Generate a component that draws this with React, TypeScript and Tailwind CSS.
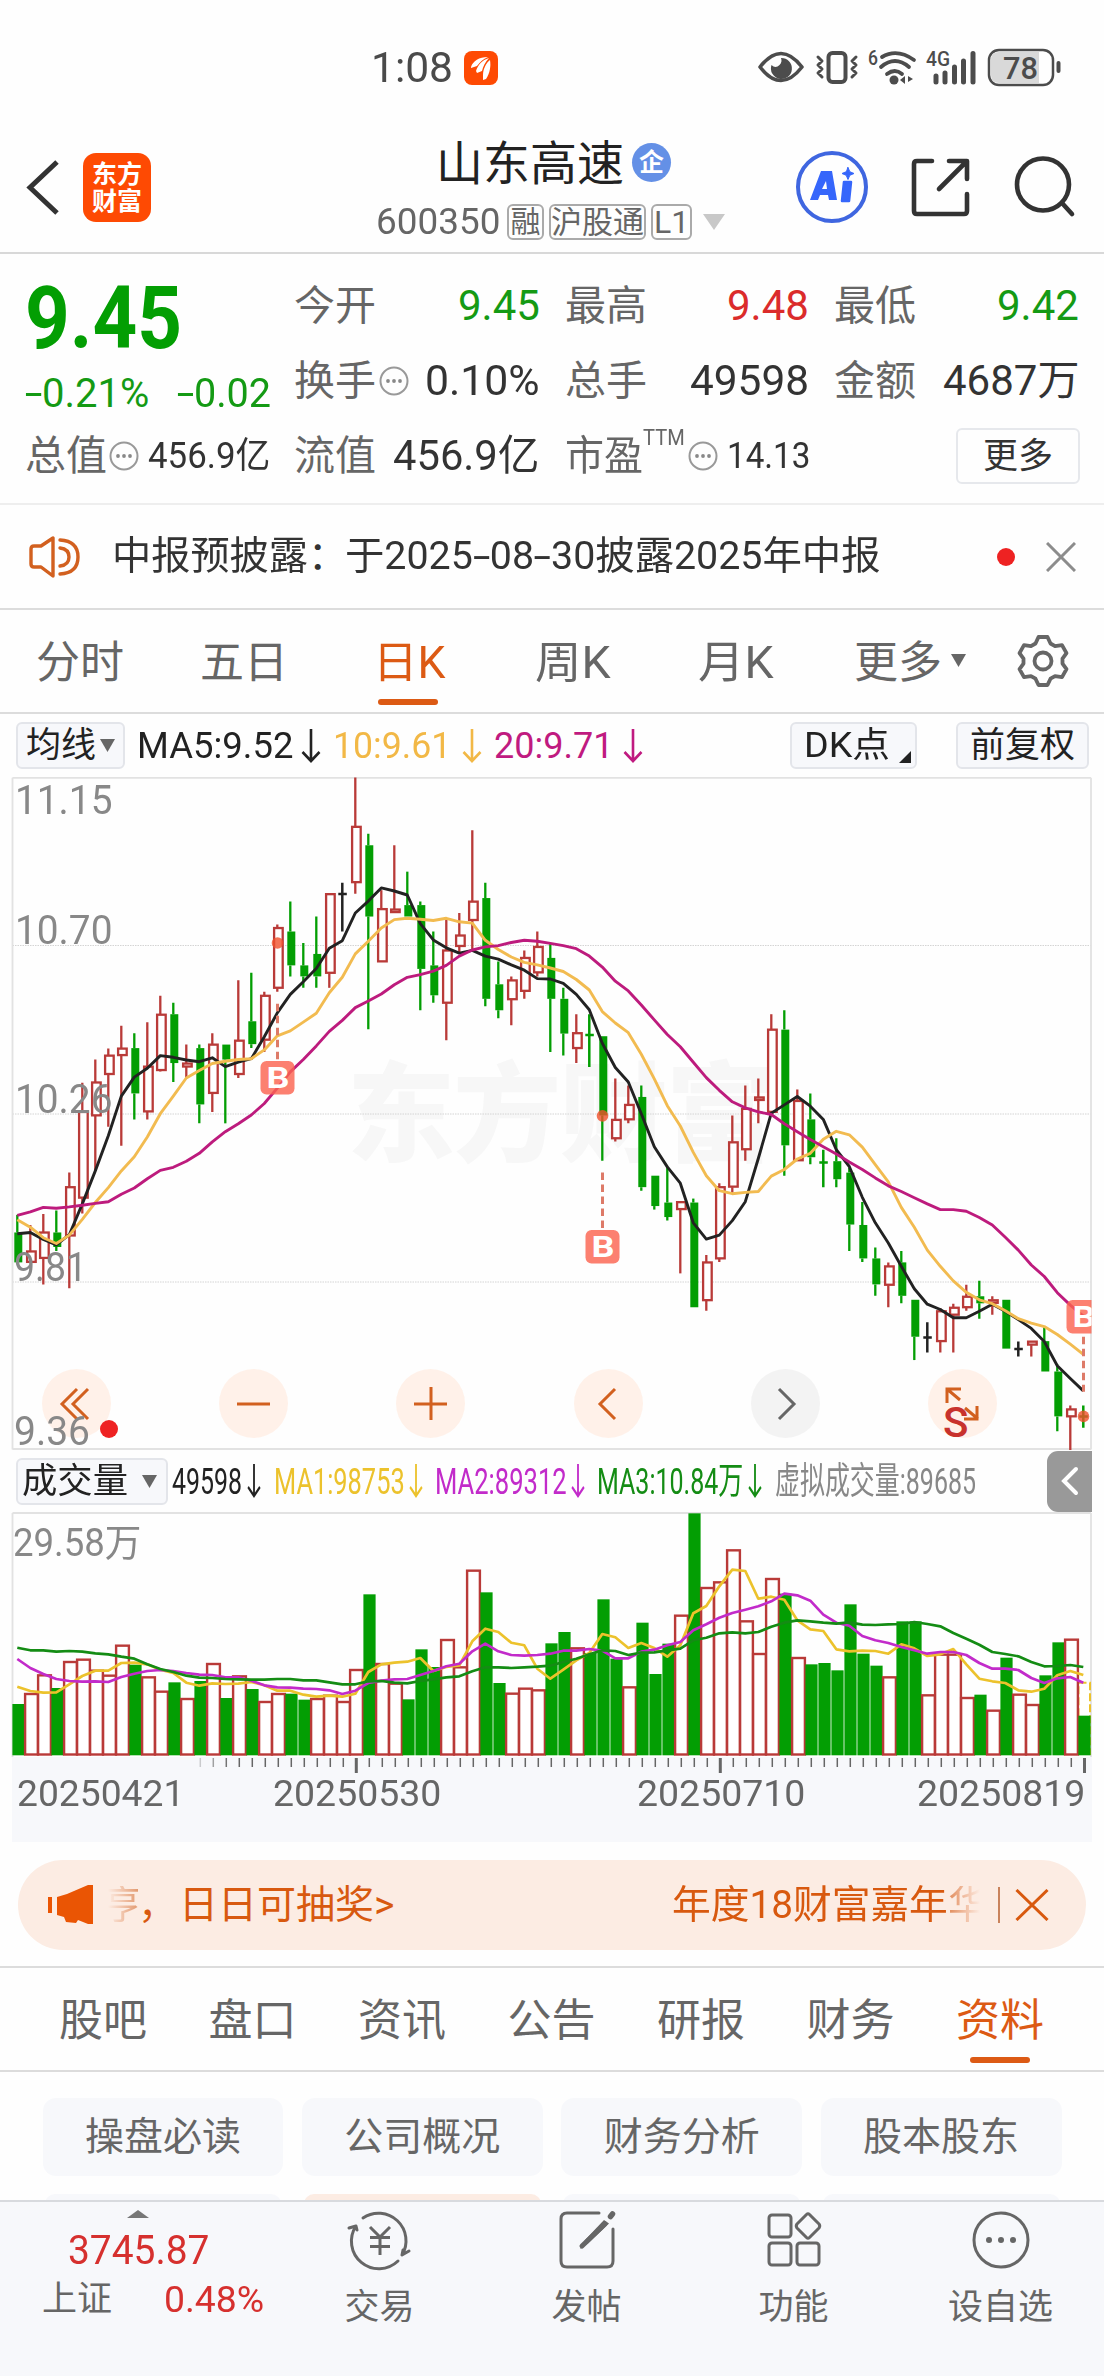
import React, { useLayoutEffect, useRef, useState } from "react";

type Candle = [string, number, number, number, number, number];

// kind, high, body top, body bottom, low, volume top
const CANDLES: Candle[] = [
  ["g", 1010, 1050, 1118, 1118, 821], ["r", 1033, 1092, 1118, 1118, 788], ["r", 1008, 1049, 1109, 1168, 732],
  ["g", 1000, 1050, 1083, 1092, 773], ["r", 914, 946, 1058, 1177, 692], ["r", 710, 775, 972, 1007, 685],
  ["r", 657, 708, 785, 910, 718], ["r", 632, 647, 691, 810, 733], ["r", 580, 631, 648, 853, 643],
  ["g", 597, 631, 734, 793, 703], ["r", 572, 672, 776, 793, 738], ["r", 512, 554, 682, 684, 781],
  ["g", 528, 554, 665, 708, 756], ["r", 623, 665, 674, 700, 803], ["g", 623, 631, 759, 802, 752],
  ["r", 597, 622, 734, 776, 698], ["g", 623, 623, 657, 802, 803], ["r", 477, 613, 691, 699, 735],
  ["g", 460, 570, 622, 631, 776], ["r", 503, 511, 613, 640, 812], ["r", 350, 357, 495, 503, 788],
  ["g", 298, 366, 443, 468, 790], ["g", 392, 443, 468, 494, 808], ["g", 332, 417, 468, 494, 803],
  ["r", 280, 280, 461, 494, 793], ["k", 255, 281, 281, 366, 812], ["r", 16, 127, 255, 280, 716],
  ["g", 144, 170, 332, 588, 492], ["r", 272, 314, 435, 435, 698], ["r", 170, 315, 323, 323, 757],
  ["g", 230, 306, 332, 332, 807], ["g", 298, 306, 451, 545, 657], ["g", 366, 443, 511, 528, 710],
  ["r", 340, 408, 529, 613, 626], ["r", 324, 374, 400, 415, 708], ["r", 136, 297, 341, 408, 418],
  ["g", 255, 290, 519, 536, 486], ["g", 434, 486, 545, 563, 758], ["r", 468, 476, 521, 579, 787],
  ["r", 409, 425, 502, 519, 772], ["r", 366, 400, 460, 468, 777], ["g", 392, 426, 519, 640, 639],
  ["g", 494, 519, 598, 648, 605], ["r", 554, 596, 632, 665, 651], ["g", 554, 601, 601, 674, 668],
  ["g", 604, 604, 784, 887, 507], ["r", 700, 793, 837, 843, 685], ["r", 716, 759, 794, 802, 768],
  ["g", 716, 742, 947, 955, 577], ["g", 921, 921, 990, 998, 731], ["g", 900, 982, 1015, 1023, 640],
  ["r", 980, 980, 998, 1143, 553], ["g", 973, 982, 1220, 1220, 249], ["r", 1101, 1117, 1205, 1228, 470],
  ["r", 938, 946, 1110, 1117, 453], ["r", 784, 844, 947, 960, 357], ["r", 716, 768, 862, 887, 570],
  ["r", 700, 742, 750, 802, 668], ["r", 554, 588, 777, 777, 443], ["g", 545, 589, 852, 921, 490],
  ["r", 725, 750, 887, 887, 680], ["g", 734, 793, 879, 895, 702], ["g", 862, 891, 891, 947, 698],
  ["g", 836, 888, 929, 947, 720], ["g", 903, 914, 1032, 1092, 522], ["g", 981, 1033, 1109, 1117, 670],
  ["g", 1084, 1109, 1168, 1194, 706], ["r", 1118, 1126, 1170, 1220, 738], ["g", 1092, 1118, 1194, 1211, 573],
  ["g", 1203, 1203, 1287, 1340, 573], ["k", 1254, 1289, 1289, 1323, 792], ["r", 1222, 1228, 1298, 1323, 670],
  ["r", 1212, 1220, 1238, 1323, 670], ["r", 1169, 1195, 1221, 1228, 800], ["g", 1160, 1195, 1211, 1246, 793],
  ["r", 1195, 1203, 1211, 1237, 838], ["g", 1203, 1203, 1314, 1314, 682], ["k", 1298, 1315, 1315, 1332, 790],
  ["r", 1297, 1297, 1306, 1332, 821], ["g", 1265, 1297, 1366, 1366, 735], ["g", 1350, 1366, 1468, 1502, 636],
  ["r", 1443, 1451, 1469, 1545, 625], ["g", 1443, 1468, 1468, 1494, 856],
];

// bars whose volume colour is the opposite of the price candle
const VOLUME_FLIPPED = new Set([23, 46]);
const volIsGreen = (i: number) => (CANDLES[i][0] === "g") !== VOLUME_FLIPPED.has(i);

const MA5 = [1053, 1050, 1066, 1078, 1055, 985, 910, 830, 740, 697, 677, 648, 652, 658, 662, 653, 673, 663, 655, 605, 551, 509, 480, 450, 404, 387, 324, 297, 267, 274, 283, 348, 385, 403, 415, 409, 422, 429, 442, 454, 473, 474, 484, 509, 544, 620, 675, 708, 780, 855, 901, 938, 1028, 1065, 1056, 1023, 980, 882, 779, 760, 741, 763, 793, 862, 900, 970, 1028, 1074, 1127, 1178, 1213, 1225, 1244, 1244, 1229, 1213, 1229, 1248, 1268, 1298, 1353, 1382, 1410];
const MA10 = [1021, 1038, 1062, 1075, 1056, 1020, 982, 948, 910, 878, 833, 780, 740, 699, 682, 666, 661, 657, 655, 635, 603, 592, 572, 552, 505, 470, 417, 388, 358, 339, 336, 338, 341, 336, 344, 347, 386, 407, 424, 436, 442, 449, 457, 475, 499, 548, 574, 596, 645, 701, 762, 808, 868, 921, 955, 962, 959, 957, 922, 907, 883, 870, 838, 820, 828, 856, 896, 935, 993, 1038, 1090, 1127, 1160, 1186, 1203, 1212, 1228, 1246, 1256, 1264, 1282, 1304, 1327];
const MA20 = [1011, 1003, 993, 995, 992, 988, 984, 980, 963, 949, 928, 909, 902, 888, 870, 844, 821, 803, 783, 757, 722, 685, 657, 626, 593, 568, 539, 524, 508, 487, 470, 464, 456, 443, 422, 408, 401, 398, 391, 386, 388, 393, 398, 405, 422, 447, 479, 501, 533, 567, 600, 628, 663, 698, 727, 753, 767, 776, 782, 803, 821, 839, 855, 872, 890, 907, 926, 944, 957, 971, 985, 998, 998, 1002, 1016, 1033, 1061, 1090, 1124, 1150, 1187, 1215, 1240];
const VMA1 = [769, 782, 787, 786, 762, 737, 721, 721, 698, 697, 702, 718, 728, 757, 766, 759, 761, 760, 755, 765, 781, 781, 793, 799, 796, 799, 790, 725, 702, 697, 694, 683, 722, 710, 705, 633, 595, 605, 637, 645, 715, 745, 718, 690, 668, 611, 621, 653, 638, 653, 679, 645, 549, 527, 468, 418, 422, 505, 499, 508, 570, 597, 602, 657, 663, 661, 662, 670, 642, 654, 677, 672, 656, 702, 745, 753, 758, 780, 784, 775, 735, 722, 734];
const VMA2 = [686, 713, 731, 746, 752, 754, 753, 755, 740, 730, 722, 719, 722, 728, 733, 734, 741, 741, 751, 765, 771, 772, 775, 776, 780, 791, 781, 758, 751, 747, 746, 734, 722, 708, 700, 663, 640, 663, 674, 676, 674, 670, 661, 661, 656, 661, 684, 684, 664, 658, 645, 635, 600, 582, 562, 548, 538, 528, 513, 490, 495, 511, 553, 577, 586, 617, 630, 638, 650, 660, 670, 665, 665, 674, 698, 715, 715, 719, 743, 758, 744, 740, 757];
const VMA3 = [652, 660, 660, 664, 662, 664, 669, 672, 679, 685, 702, 716, 725, 736, 742, 743, 746, 747, 748, 748, 746, 746, 750, 750, 756, 762, 762, 753, 752, 757, 759, 752, 747, 741, 738, 723, 711, 711, 713, 711, 709, 706, 695, 685, 672, 660, 662, 674, 667, 666, 660, 655, 630, 622, 609, 606, 609, 605, 589, 577, 570, 573, 577, 580, 576, 583, 584, 582, 581, 575, 581, 588, 608, 625, 643, 665, 671, 678, 695, 708, 707, 704, 710];

const cx = (i: number) => 17.3 + 13 * i;
const py = (v: number) => (v - 16) * 0.44 + 0.5;
const vy = (v: number) => (v - 248) / 3 + 1;
const line = (data: number[], f: (v: number) => number) => data.map((v, i) => `${cx(i).toFixed(1)},${f(v).toFixed(1)}`).join(" ");

const RED = "#b93a38";
const GREEN = "#039e03";

/** Text squeezed or stretched horizontally to a given width. */
function Fit({ w, className = "", children }: { w: number; className?: string; children: React.ReactNode }) {
  const ref = useRef<HTMLSpanElement>(null);
  const [s, setS] = useState(1);
  useLayoutEffect(() => {
    if (ref.current) setS(w / ref.current.offsetWidth);
  }, [w]);
  return (
    <span className={`block shrink-0 whitespace-nowrap leading-none ${className}`} style={{ width: w }}>
      <span ref={ref} className="inline-block origin-left leading-none" style={{ transform: `scaleX(${s})` }}>
        {children}
      </span>
    </span>
  );
}

/** A hyphen drawn as wide as the figures beside it. */
const Hy = () => <span className="inline-block scale-x-[1.6] px-[3px]">-</span>;

function Dots({ className = "" }: { className?: string }) {
  return (
    <svg className={`shrink-0 ${className}`} width="30" height="30" viewBox="0 0 30 30">
      <circle cx="15" cy="15" r="13.5" fill="none" stroke="#999" strokeWidth="2" />
      <circle cx="9" cy="15" r="1.9" fill="#888" />
      <circle cx="15" cy="15" r="1.9" fill="#888" />
      <circle cx="21" cy="15" r="1.9" fill="#888" />
    </svg>
  );
}

function StatusBar() {
  return (
    <div className="flex h-[120px] items-center pt-[16px] text-[#4a4a4a]">
      <Fit w={82} className="ml-[371px] text-[42px]">1:08</Fit>
      <svg className="ml-[11px]" width="34" height="34" viewBox="0 0 34 34">
        <rect width="34" height="34" rx="8" fill="#fe4a03" />
        <path d="M7 16C9 10 15 6 24 6c-5 2-8 5-11 9l-6 2z" fill="#fff" />
        <path d="M12 20c2-6 6-11 13-13-4 4-6 9-7 13l-5 2z" fill="#fff" />
        <path d="M19 24c0-6 3-12 7-15 1 6 0 13-4 19l-3 1z" fill="#fff" />
      </svg>
      <svg className="ml-[258px]" width="305" height="48" viewBox="755 44 305 48" fill="none" stroke="#4c4c4c" strokeLinecap="round" strokeLinejoin="round">
        <path d="M759 67q21-27 42 0q-21 27-42 0z" strokeWidth="3.6" />
        <path d="M780 58a10.500 10.500 0 1 1-9.500 7q4 4 8 0q3-3 1.500-7z" fill="#4c4c4c" stroke="none" />
        <rect x="827.500" y="53" width="17" height="29" rx="4" strokeWidth="4" />
        <path d="M817 57l4 4-4 4 4 4-4 4 4 4M855 57l-4 4 4 4-4 4 4 4-4 4" strokeWidth="3" />
        <path d="M881 57q15-9 32 3M880 67q14-12 28 0M886 74q8-6 15 0" strokeWidth="3.800" />
        <circle cx="893" cy="80" r="4.500" fill="#4c4c4c" stroke="none" />
        <path d="M904 76v8l-5-4zM907 76l5 3-5 3z" fill="#4c4c4c" stroke="none" />
        <path d="M935 76v6M944 73v9M953.500 67v15M962.500 61v21M972 53.500v28.500" strokeWidth="5" />
        <rect x="988" y="50" width="64" height="35" rx="10" strokeWidth="2.500" />
        <path d="M998 52h40v31h-40q-8 0-8-8v-15q0-8 8-8z" fill="#d9d9d9" stroke="none" />
        <path d="M1057.500 63v8" strokeWidth="4" />
        <g fill="#4c4c4c" stroke="none" fontFamily="Roboto">
          <text x="867" y="65" fontSize="20" fontWeight="500" textLength="10" lengthAdjust="spacingAndGlyphs">6</text>
          <text x="925" y="66" fontSize="20" fontWeight="500" textLength="24" lengthAdjust="spacingAndGlyphs">4G</text>
          <text x="1002" y="79" fontSize="31" fontWeight="500" textLength="35" lengthAdjust="spacingAndGlyphs">78</text>
        </g>
      </svg>
    </div>
  );
}

function Header() {
  return (
    <header className="flex h-[134px] border-b-2 border-[#d8d8d8] text-[#222]">
      <svg className="ml-[25px] mt-[39px] shrink-0" width="36" height="58" viewBox="0 0 36 58" fill="none" stroke="#333" strokeWidth="5">
        <path d="M32 3L5 28.500L32 54" />
      </svg>
      <div className="ml-[22px] mt-[33px] flex h-[69px] w-[68px] shrink-0 flex-col items-center justify-center gap-[2px] rounded-[13px] bg-[#fe4a03] text-[25px] font-bold leading-none text-white">
        <span>东方</span>
        <span>财富</span>
      </div>
      <div className="ml-[223px] flex w-[380px] shrink-0 flex-col">
        <div className="mt-[18px] flex h-[48px] items-center">
          <Fit w={188} className="ml-[62px] pt-[2px] text-[47px]">山东高速</Fit>
          <span className="ml-[8px] flex size-[39px] items-center justify-center rounded-full bg-[#6490e6] text-[25px] font-bold leading-none text-white">企</span>
        </div>
        <div className="mt-[17px] flex h-[38px] items-center text-[#666]">
          <Fit w={124} className="ml-[2px] text-[36px]">600350</Fit>
          <div className="ml-[7px] flex h-[36px] w-[37px] items-center justify-center rounded-md border-2 border-[#aaa] text-[30px] leading-none">融</div>
          <div className="ml-[5px] flex h-[36px] w-[97px] items-center justify-center whitespace-nowrap rounded-md border-2 border-[#aaa] text-[31px] leading-none">沪股通</div>
          <div className="ml-[5px] flex h-[36px] w-[41px] items-center justify-center rounded-md border-2 border-[#aaa] text-[32px] leading-none">L1</div>
          <svg className="ml-[11px]" width="22" height="16" viewBox="0 0 22 16"><path d="M0 0h22l-11 16z" fill="#c8c8c8" /></svg>
        </div>
      </div>
      <svg className="ml-[36px] mt-[26px] shrink-0" width="290" height="84" viewBox="790 146 290 84" fill="none" stroke="#333" strokeWidth="4.600" strokeLinecap="round" strokeLinejoin="round">
        <circle cx="832" cy="187" r="34" stroke="#3f66e0" strokeWidth="4" />
        <path d="M810 200L821 171h11l5 29h-8l-1-5h-8l-2 5zM822 189h5l-1-8z" fill="#3666fb" stroke="none" fillRule="evenodd" />
        <path d="M844 182h7l-2 19h-7z" fill="#3666fb" stroke="#3666fb" strokeWidth="2.500" />
        <path d="M848 167.500l1.800 4.200 4.200 1.800-4.200 1.800-1.800 4.200-1.800-4.200-4.200-1.800 4.200-1.800z" fill="#3666fb" stroke="#3666fb" strokeWidth="1" />
        <path d="M932 161h-15q-3 0-3 3v47q0 3 3 3h47q3 0 3-3v-17M949 161h18v18M966 162L939 189" />
        <circle cx="1043" cy="184.500" r="26" />
        <path d="M1062 203l10 11" />
      </svg>
    </header>
  );
}

function Quote({ label, value, w, lw = 82, color = "text-[#333]", dots = false }: { label: string; value: string; w: number; lw?: number; color?: string; dots?: boolean }) {
  return (
    <div className="flex h-[50px] items-center">
      <Fit w={lw} className="text-[41px] text-[#666]">{label}</Fit>
      {dots && <Dots className="ml-[3px]" />}
      <Fit w={w} className={`ml-auto text-[42px] ${color}`}>{value}</Fit>
    </div>
  );
}

function QuotePanel() {
  return (
    <section className="flex h-[251px] border-b-2 border-[#eee]">
      <div className="ml-[25px] w-[269px] shrink-0">
        <Fit w={157} className="mt-[21px] text-[87px] font-bold text-[#039e03]">9.45</Fit>
        <div className="mt-[12px] flex h-[40px] items-center text-[40px] text-[#149a14]">
          <Fit w={124}><Hy />0.21%</Fit>
          <Fit w={94} className="ml-[28px]"><Hy />0.02</Fit>
        </div>
        <div className="mt-[17px] flex h-[50px] items-center">
          <Fit w={82} className="text-[41px] text-[#666]">总值</Fit>
          <Dots className="ml-[2px]" />
          <Fit w={122} className="ml-[9px] text-[36px] text-[#333]">456.9亿</Fit>
        </div>
      </div>
      <div className="grid w-[785px] shrink-0 grid-cols-[246px_244px_245px] grid-rows-[50px_50px_50px] gap-x-[25px] gap-y-[25px] pt-[27px]">
        <Quote label="今开" value="9.45" w={82} color="text-[#149a14]" />
        <Quote label="最高" value="9.48" w={82} color="text-[#db2b2b]" />
        <Quote label="最低" value="9.42" w={82} color="text-[#149a14]" />
        <Quote label="换手" value="0.10%" w={115} dots />
        <Quote label="总手" value="49598" w={119} />
        <Quote label="金额" value="4687万" w={136} />
        <Quote label="流值" value="456.9亿" w={147} />
        <div className="flex h-[50px] items-center">
          <Fit w={78} className="text-[41px] text-[#666]">市盈</Fit>
          <Fit w={42} className="mb-[36px] text-[22px] text-[#666]">TTM</Fit>
          <Dots className="ml-[3px]" />
          <Fit w={83} className="ml-[9px] text-[36px] text-[#333]">14.13</Fit>
        </div>
        <div className="flex h-[50px] items-center">
          <div className="ml-auto mr-[-1px] flex h-[56px] w-[124px] shrink-0 items-center justify-center rounded-md border-2 border-[#e6e8ec] text-[35px] leading-none text-[#333]">更多</div>
        </div>
      </div>
    </section>
  );
}

function Notice() {
  return (
    <section className="flex h-[105px] items-center border-b-2 border-[#dcdcdc] text-[#333]">
      <svg className="ml-[28px]" width="54" height="48" viewBox="28 532 54 48" fill="none" stroke="#d2601f" strokeWidth="3.400" strokeLinejoin="round" strokeLinecap="round">
        <path d="M53 537v38l-12-9h-7q-3 0-3-3v-15q0-3 3-3h7z" />
        <path d="M60 539q18 1 18 17t-18 17M60 547q9 1 9 9t-9 9" />
      </svg>
      <Fit w={196} className="ml-[30px] text-[39px]">中报预披露</Fit>
      <span className="w-[37px] text-[39px] leading-none">：</span>
      <Fit w={536} className="text-[39px]">于2025<Hy />08<Hy />30披露2025年中报</Fit>
      <span className="ml-[116px] size-[18px] rounded-full bg-[#ee2222]" />
      <svg className="ml-[31px]" width="30" height="30" viewBox="0 0 30 30" stroke="#8c8c8c" strokeWidth="3"><path d="M1 1l28 28M29 1L1 29" /></svg>
    </section>
  );
}

function PeriodTabs() {
  return (
    <nav className="grid h-[104px] grid-cols-[164px_173px_36px_162px_163px_156px_97px_65px_88px] items-center border-b-2 border-[#dcdcdc] text-[44px] leading-none text-[#666]">
      <span className="pl-[36px] pt-[3px]">分时</span>
      <span className="pl-[36px] pt-[3px]">五日</span>
      <span />
      <div className="relative flex h-full items-center pt-[3px] text-[#dc5a14]">
        <Fit w={73}>日K</Fit>
        <span className="absolute bottom-[7px] left-[5px] h-[6px] w-[60px] rounded-full bg-[#dc5a14]" />
      </div>
      <Fit w={76} className="pt-[3px]">周K</Fit>
      <Fit w={76} className="pt-[3px]">月K</Fit>
      <span className="whitespace-nowrap pt-[3px]">更多</span>
      <svg width="16" height="14" viewBox="0 0 16 14"><path d="M0 0h15L7.500 13z" fill="#666" /></svg>
      <svg width="54" height="54" viewBox="-27 -27 54 54" fill="none" stroke="#666" strokeWidth="3.800" strokeLinejoin="round">
        <path d="M-4.500-24h9l3 6.500 4.500 2.600 7-1 4.500 8-4 5.500v5l4 5.500-4.500 8-7-1-4.500 2.600-3 6.300h-9l-3-6.300-4.500-2.600-7 1-4.500-8 4-5.500v-5l-4-5.500 4.500-8 7 1 4.500-2.600z" />
        <circle r="8.500" />
      </svg>
    </nav>
  );
}

const Down = ({ c, w = 20 }: { c: string; w?: number }) => (
  <svg className="shrink-0" width={w} height="34" viewBox="0 0 20 34" preserveAspectRatio="none" fill="none" stroke={c} strokeWidth="2.600"><path d="M10 0v31M1.500 23L10 32l8.500-9" /></svg>
);

function MaRow() {
  return (
    <div className="flex h-[63px] items-center text-[36px]">
      <div className="ml-[16px] flex h-[47px] w-[109px] items-center rounded-md border-2 border-[#e3e5ea] bg-[#f7f8fb] pl-[8px]">
        <Fit w={70} className="text-[35px] text-[#222]">均线</Fit>
        <svg className="ml-[4px]" width="15" height="13" viewBox="0 0 15 13"><path d="M0 0h15L7.500 13z" fill="#666" /></svg>
      </div>
      <Fit w={156} className="ml-[12px] text-[#222]">MA5:9.52</Fit>
      <span className="ml-[8px]"><Down c="#222" /></span>
      <Fit w={118} className="ml-[12px] text-[#f2b846]">10:9.61</Fit>
      <span className="ml-[11px]"><Down c="#f2b846" /></span>
      <Fit w={119} className="ml-[12px] text-[#c01a80]">20:9.71</Fit>
      <span className="ml-[10px]"><Down c="#c01a80" /></span>
      <div className="relative ml-[147px] flex h-[47px] w-[127px] items-center rounded-md border-2 border-[#e3e5ea] bg-[#f7f8fb] pl-[12px] text-[#222]">
        <Fit w={86} className="text-[35px]">DK点</Fit>
        <svg className="absolute bottom-[4px] right-[4px]" width="12" height="12" viewBox="0 0 12 12"><path d="M12 0v12H0z" fill="#222" /></svg>
      </div>
      <div className="ml-[39px] flex h-[47px] w-[133px] items-center justify-center rounded-md border-2 border-[#e3e5ea] bg-[#f7f8fb] text-[35px] leading-none text-[#222]">前复权</div>
    </div>
  );
}

function Marker({ x, v0, v1, top, dot, clip = false }: { x: number; v0: number; v1: number; top: number; dot: number; clip?: boolean }) {
  return (
    <g clipPath={clip ? "url(#plot)" : undefined}>
      <path d={`M${x} ${py(v0)}V${py(v1)}`} stroke="#dd7a68" strokeWidth="3" strokeDasharray="7.500 4.500" />
      <rect x={x - 17} y={top} width="34" height="33.500" rx="6" fill="#fb6450" fillOpacity="0.82" />
      <text x={x - 11} y={top + 27} fontFamily="Roboto" fontSize="29" fontWeight="700" fill="#fff" textLength="23" lengthAdjust="spacingAndGlyphs">B</text>
      <ellipse cx={x} cy={py(dot)} rx="5.800" ry="5.800" fill="#f0502c" fillOpacity="0.8" />
    </g>
  );
}

function RoundButton({ gray = false, children }: { gray?: boolean; children: React.ReactNode }) {
  return (
    <div className={`flex size-[69px] items-center justify-center rounded-full ${gray ? "bg-[#f2f2f2]/95" : "bg-[#fff0e8]/95"}`}>
      <svg width="46" height="46" viewBox="-23 -23 46 46" fill="none" stroke={gray ? "#666" : "#d2601f"} strokeWidth="3">{children}</svg>
    </div>
  );
}

function PriceChart() {
  return (
    <section className="relative h-[673px]">
      <svg className="absolute inset-0" width="1104" height="673" viewBox="0 0 1104 673">
        <defs><clipPath id="plot"><rect x="0" y="0" width="1091.500" height="673" /></clipPath></defs>
        <text x="347" y="376" fontFamily="Noto Sans CJK SC" fontSize="108" fontWeight="900" fill="#f7f7f7" textLength="427">东方财富</text>
        <path d="M12.500 168.500H1091M12.500 337H1091M12.500 505H1091" stroke="#d4d4d4" strokeWidth="1" strokeDasharray="1.500 1" />
        <path d="M12.500 672.500V.8M1091 .8V672.500" stroke="#e2e2e2" strokeWidth="1.800" />
        <path d="M12.500 .8H1091M12.500 672H1091" stroke="#e2e2e2" strokeWidth="2" />
        {CANDLES.map(([k, hi, t, b, lo], i) => {
          const x = cx(i);
          const c = k === "r" ? RED : k === "g" ? GREEN : "#222";
          if (t === b) {
            return <path key={i} d={`M${x} ${py(hi)}V${py(lo)}M${x - 4} ${py(t)}h8.500`} stroke={c} strokeWidth="2.500" />;
          }
          return (
            <g key={i} stroke={c} strokeWidth="2.300">
              <path d={`M${x} ${py(hi)}V${py(t)}M${x} ${py(b)}V${py(lo)}`} />
              {k === "g" ? (
                <rect x={x - 3} y={py(t)} width="8" height={py(b) - py(t)} fill={c} stroke="none" />
              ) : (
                <rect x={x - 3.200} y={py(t) + 0.500} width="8.600" height={Math.max(py(b) - py(t) - 1, 2)} fill="#fff" />
              )}
            </g>
          );
        })}
        <g fill="none" strokeWidth="2.900" strokeLinejoin="round">
          <polyline points={line(MA5, py)} stroke="#222" />
          <polyline points={line(MA10, py)} stroke="#f2bb50" />
          <polyline points={line(MA20, py)} stroke="#bd1b7d" />
        </g>
        <Marker x={277.500} v0={530} v1={657} top={284} dot={392} />
        <Marker x={602.500} v0={914} v1={1040} top={453} dot={785} />
        <Marker x={1083.500} v0={1287} v1={1412} top={523} dot={1468} clip />
      </svg>
      <div className="absolute left-[42px] top-[592px] flex gap-[108.200px]">
        <RoundButton><path d="M0-15l-15 15 15 15M11-15l-15 15 15 15" /></RoundButton>
        <RoundButton><path d="M-17 0h33" /></RoundButton>
        <RoundButton><path d="M-17 0h33M0-17v33" /></RoundButton>
        <RoundButton><path d="M7-15l-15 15 15 15" /></RoundButton>
        <RoundButton gray><path d="M-6-15l15 15-15 15" /></RoundButton>
        <RoundButton>
          <path d="M-1-15h-14v14M-15-15l13 11M3 4l13 11M15 2v13h-13" />
        </RoundButton>
      </div>
      <Fit w={25} className="absolute left-[943px] top-[625px] text-[42px] font-medium text-[#c8322d]">S</Fit>
      <span className="absolute left-[100px] top-[643px] size-[18px] rounded-full bg-[#ee2222]" />
      <div className="absolute inset-0 text-[40px] text-[#888]">
        <Fit w={97} className="absolute left-[15px] top-[4px]">11.15</Fit>
        <Fit w={97} className="absolute left-[15px] top-[134px]">10.70</Fit>
        <Fit w={97} className="absolute left-[15px] top-[303px]">10.26</Fit>
        <Fit w={73} className="absolute left-[14px] top-[471px]">9.81</Fit>
        <Fit w={76} className="absolute left-[14px] top-[635px]">9.36</Fit>
      </div>
    </section>
  );
}

function VolumeRow() {
  return (
    <div className="flex h-[62px] items-center text-[37px]">
      <div className="ml-[16px] flex h-[47px] w-[152px] items-center rounded-md border-2 border-[#e3e5ea] bg-[#f7f8fb] pl-[4px]">
        <Fit w={106} className="text-[35px] text-[#222]">成交量</Fit>
        <svg className="ml-[14px]" width="15" height="13" viewBox="0 0 15 13"><path d="M0 0h15L7.500 13z" fill="#666" /></svg>
      </div>
      <Fit w={70} className="ml-[4px] text-[#222]">49598</Fit>
      <span className="ml-[5px]"><Down c="#222" w={14} /></span>
      <Fit w={131} className="ml-[13px] text-[#ecc22c]">MA1:98753</Fit>
      <span className="ml-[4px]"><Down c="#ecc22c" w={14} /></span>
      <Fit w={132} className="ml-[12px] text-[#c22bca]">MA2:89312</Fit>
      <span className="ml-[4px]"><Down c="#c22bca" w={14} /></span>
      <Fit w={146} className="ml-[12px] text-[#148c14]">MA3:10.84万</Fit>
      <span className="ml-[5px]"><Down c="#148c14" w={14} /></span>
      <Fit w={201} className="ml-[13px] text-[#888]">虚拟成交量:89685</Fit>
      <div className="ml-auto mr-[12px] flex h-[61px] w-[45px] items-center justify-center rounded-l-[11px] bg-[#999]">
        <svg width="18" height="30" viewBox="0 0 18 30" fill="none" stroke="#fff" strokeWidth="4" strokeLinecap="round"><path d="M15 3L3 15l12 12" /></svg>
      </div>
    </div>
  );
}

function VolumeChart() {
  const major = [26, 54, 82];
  return (
    <section className="relative h-[330px] shrink-0">
      <svg className="absolute inset-0" width="1104" height="330" viewBox="0 0 1104 330">
        <rect x="12" y="245" width="1080" height="85" fill="#f7f8fb" />
        <path d="M12.500 245V1M1091 1V245" stroke="#e2e2e2" strokeWidth="1.800" />
        <path d="M12.500 1H1091" stroke="#e2e2e2" strokeWidth="2" />
        <rect x="1078.500" y={vy(757)} width="11.500" height={242 - vy(757)} fill="#fff" stroke="#ecc22c" strokeWidth="2" strokeDasharray="8 3" />
        {CANDLES.map((c, i) => {
          const y = vy(c[5]);
          const x = 12.400 + 13 * i;
          return volIsGreen(i) ? (
            <rect key={i} x={x} y={y} width="12.200" height={243.300 - y} fill={GREEN} />
          ) : (
            <rect key={i} x={x - 0.300} y={y + 1} width="12.800" height={241.500 - y} fill="#fff" stroke={RED} strokeWidth="2.400" />
          );
        })}
        <g fill="none" strokeWidth="2.700" strokeLinejoin="round">
          <polyline points={line(VMA1, vy)} stroke="#ecc22c" />
          <polyline points={line(VMA2, vy)} stroke="#c22bca" />
          <polyline points={line(VMA3, vy)} stroke="#148c14" />
        </g>
        {CANDLES.map((_, i) =>
          i < 14 ? null : (
            <path
              key={i}
              d={`M${i === 82 ? 1084.500 : cx(i) + 1} 246v${major.includes(i) ? 15 : 9}`}
              stroke="#666"
              strokeWidth={major.includes(i) ? 3 : 1.500}
              opacity={i < 17 ? 0.3 * (i - 13) : 1}
            />
          ),
        )}
      </svg>
      <Fit w={128} className="absolute left-[13px] top-[12px] text-[38px] text-[#888]">29.58万</Fit>
      <div className="absolute left-0 top-[263px] flex text-[37px] text-[#666]">
        <Fit w={167} className="ml-[17px]">20250421</Fit>
        <Fit w={168} className="ml-[89px]">20250530</Fit>
        <Fit w={168} className="ml-[196px]">20250710</Fit>
        <Fit w={168} className="ml-[112px]">20250819</Fit>
      </div>
    </section>
  );
}

function Banner() {
  return (
    <div className="mx-[18px] mt-[18px] flex h-[90px] shrink-0 items-center rounded-full bg-[#fcece3] text-[39px] leading-none text-[#d8590f]">
      <svg className="ml-[29px]" width="48" height="42" viewBox="47 1884 48 42" fill="#ea5504">
        <path d="M48 1897h4v16h-4zM57 1897l10-3 21-9h5v39h-5l-10-4-2 3-10-1-2-5-7-2z" />
      </svg>
      <span className="ml-[13px] w-[30px] overflow-hidden bg-linear-to-r from-[#fcece3] to-[#e29a70] bg-clip-text text-transparent">
        <span className="-ml-[5px] inline-block">亨</span>
      </span>
      <span className="w-[38px]">，</span>
      <Fit w={215} className="ml-[3px]">日日可抽奖&gt;</Fit>
      <Fit w={276} className="ml-[278px]">年度18财富嘉年</Fit>
      <span className="w-[32px] overflow-hidden whitespace-nowrap bg-linear-to-r from-[#e08a58] to-[#fcece3] bg-clip-text text-transparent">华</span>
      <span className="ml-[18px] h-[36px] w-[2px] bg-[#c9835c]" />
      <svg className="ml-[15px]" width="34" height="32" viewBox="0 0 34 32" stroke="#d8590f" strokeWidth="3"><path d="M1.500 1l31 30M32.500 1l-31 30" /></svg>
    </div>
  );
}

function SectionTabs() {
  const tabs = ["股吧", "盘口", "资讯", "公告", "研报", "财务"];
  return (
    <nav className="mt-[16px] flex h-[106px] shrink-0 items-center gap-[61.500px] border-y-2 border-[#dcdcdc] pl-[59px] text-[44px] leading-none text-[#666]">
      {tabs.map((t) => (
        <span key={t} className="w-[88px] shrink-0 whitespace-nowrap pt-[3px]">{t}</span>
      ))}
      <div className="relative flex h-full w-[88px] shrink-0 items-center pt-[3px] text-[#dc5a14]">
        资料
        <span className="absolute bottom-[7px] left-[14px] h-[6px] w-[60px] rounded-full bg-[#dc5a14]" />
      </div>
    </nav>
  );
}

function Chips() {
  return (
    <div className="grid h-[128px] shrink-0 grid-cols-4 grid-rows-[78px_40px] gap-x-[18.500px] gap-y-[18px] overflow-hidden px-[42.500px] pt-[26px] text-[39px] leading-none text-[#666]">
      {["操盘必读", "公司概况", "财务分析", "股本股东"].map((t) => (
        <div key={t} className="flex items-center justify-center rounded-[13px] bg-[#f7f8fb]">{t}</div>
      ))}
      <div className="mx-[2px] rounded-[10px] bg-[#f7f8fb]" />
      <div className="mx-[2px] rounded-[10px] bg-[#fcece3]" />
      <div className="mx-[2px] rounded-[10px] bg-[#f7f8fb]" />
      <div className="mx-[2px] rounded-[10px] bg-[#f7f8fb]" />
    </div>
  );
}

function NavItem({ label, children }: { label: string; children: React.ReactNode }) {
  return (
    <div className="flex w-[207px] shrink-0 flex-col items-center">
      <svg className="mt-[6px]" width="72" height="64" viewBox="-36 -32 72 64" fill="none" stroke="#666" strokeWidth="3" strokeLinecap="round" strokeLinejoin="round">{children}</svg>
      <span className="mt-[18px] text-[35px] leading-none">{label}</span>
    </div>
  );
}

function BottomBar() {
  return (
    <footer className="flex flex-1 border-t-2 border-[#d8dade] bg-[#f7f8fb] text-[#666]">
      <div className="w-[276px] shrink-0">
        <svg className="ml-[127px] mt-[8px]" width="22" height="8" viewBox="0 0 22 8"><path d="M0 8L11 0l11 8z" fill="#777" /></svg>
        <Fit w={141} className="ml-[68px] mt-[13px] text-[40px] text-[#d6302e]">3745.87</Fit>
        <div className="mt-[10px] flex items-center">
          <Fit w={70} className="ml-[42px] text-[35px]">上证</Fit>
          <Fit w={100} className="ml-[52px] text-[37px] text-[#d6302e]">0.48%</Fit>
        </div>
      </div>
      <NavItem label="交易">
        <path d="M-17-22A27.500 27.500 0 0 1 22 15l1-5m-1 5l7-4M18 21A27.500 27.500 0 0 1-24-14l-7 2m7-2l1 4" />
        <path d="M-10-13L0-3L10-13M0-3V15M-10-2.500H10M-10 6.500H10" strokeLinecap="butt" />
      </NavItem>
      <NavItem label="发帖">
        <path d="M12-27h-32q-6 0-6 6v42q0 6 6 6h40q6 0 6-6v-32" />
        <path d="M17-20L22-16.500 1 3.500-7 9-2 0z" fill="#666" stroke="none" />
        <path d="M-5 6L18-16" strokeWidth="5" />
        <path d="M23.500-23.500l2-2.500" strokeWidth="5.500" />
      </NavItem>
      <NavItem label="功能">
        <rect x="-25" y="-25" width="22" height="22" rx="3" />
        <rect x="-25" y="3" width="22" height="22" rx="3" />
        <rect x="3" y="3" width="22" height="22" rx="3" />
        <path d="M12.500-25.500q1.500-1.500 3 0L25-16q1.500 2 0 4L15.500-2.500q-1.500 1.500-3 0L3-12q-1.500-2 0-4z" />
      </NavItem>
      <NavItem label="设自选">
        <circle r="27" />
        <g fill="#666" stroke="none"><circle cx="-12" r="3" /><circle r="3" /><circle cx="12" r="3" /></g>
      </NavItem>
    </footer>
  );
}

export default function App() {
  return (
    <main className="flex h-[2376px] w-[1104px] flex-col overflow-hidden bg-[#fefefe] font-[Roboto,'Noto_Sans_CJK_SC',sans-serif]">
      <StatusBar />
      <Header />
      <QuotePanel />
      <Notice />
      <PeriodTabs />
      <MaRow />
      <PriceChart />
      <VolumeRow />
      <VolumeChart />
      <Banner />
      <SectionTabs />
      <Chips />
      <BottomBar />
    </main>
  );
}
